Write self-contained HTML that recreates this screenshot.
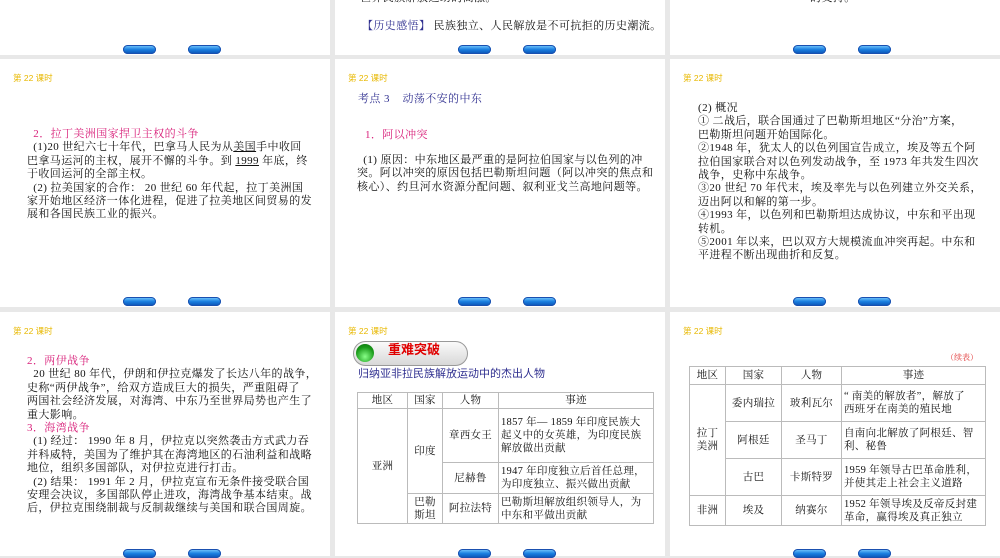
<!DOCTYPE html>
<html><head><meta charset="utf-8"><style>
*{margin:0;padding:0;box-sizing:border-box}
body{width:1000px;height:556px;background:#e8e8e8;position:relative;overflow:hidden;font-family:"Liberation Serif","Noto Serif CJK SC","Noto Sans CJK SC",serif;font-size:11px;letter-spacing:0.4px;color:#111}
.s{position:absolute;background:#fff;overflow:hidden}
.a{position:absolute;white-space:nowrap;line-height:13.4px}
.t{color:#e8b800;font-size:8.5px;letter-spacing:0;font-family:"Liberation Sans","Noto Sans CJK SC",sans-serif}
.m{color:#d8207a}
.b{color:#303090}
.btn{position:absolute;width:33px;height:9px;border-radius:5px;background:linear-gradient(#7fd0ff,#1a7fe0 50%,#0a4fb0);box-shadow:0 0 0 1px #1a50b0 inset}
table{position:absolute;border-collapse:collapse;font-size:10.5px;letter-spacing:0.3px;table-layout:fixed}
td{border:1px solid #bbb;text-align:center;line-height:13px;padding:0 2px;white-space:nowrap;overflow:hidden}
td.l{text-align:left}
</style></head><body>
<!-- row1 -->
<div class="s" style="left:0;top:0;width:330px;height:55px"></div>
<div class="s" style="left:335px;top:0;width:330px;height:55px">
<div class="a" style="left:25px;top:-8px">世界民族解放运动的高涨。</div>
<div class="a" style="left:27px;top:20px"><span class="b">【历史感悟】</span> 民族独立、人民解放是不可抗拒的历史潮流。</div></div>
<div class="s" style="left:670px;top:0;width:330px;height:55px"><div class="a" style="left:140px;top:-8px">的支持。</div></div>
<!-- row2 -->
<div class="s" style="left:0;top:59px;width:330px;height:248px">
<div class="a t" style="left:13px;top:13px">第 22 课时</div>
<div class="a" style="left:27px;top:69px"><span class="m">&nbsp;&nbsp;2．拉丁美洲国家捍卫主权的斗争</span><br>&nbsp;&nbsp;(1)20 世纪六七十年代，巴拿马人民为从<u>美国</u>手中收回<br>巴拿马运河的主权，展开不懈的斗争。到 <u>1999</u> 年底，终<br>于收回运河的全部主权。<br>&nbsp;&nbsp;(2) 拉美国家的合作： 20 世纪 60 年代起，拉丁美洲国<br>家开始地区经济一体化进程，促进了拉美地区间贸易的发<br>展和各国民族工业的振兴。</div></div>
<div class="s" style="left:335px;top:59px;width:330px;height:248px">
<div class="a t" style="left:13px;top:13px">第 22 课时</div>
<div class="a b" style="left:23px;top:34px">考点 3&nbsp;&nbsp;&nbsp;&nbsp;动荡不安的中东</div>
<div class="a m" style="left:30px;top:70px">1．阿以冲突</div>
<div class="a" style="left:22px;top:95px">&nbsp;&nbsp;(1) 原因：中东地区最严重的是阿拉伯国家与以色列的冲<br>突。阿以冲突的原因包括巴勒斯坦问题（阿以冲突的焦点和<br>核心）、约旦河水资源分配问题、叙利亚戈兰高地问题等。</div></div>
<div class="s" style="left:670px;top:59px;width:330px;height:248px">
<div class="a t" style="left:13px;top:13px">第 22 课时</div>
<div class="a" style="left:28px;top:43px">(2) 概况<br>① 二战后，联合国通过了巴勒斯坦地区“分治”方案，<br>巴勒斯坦问题开始国际化。<br>②1948 年，犹太人的以色列国宣告成立，埃及等五个阿<br>拉伯国家联合对以色列发动战争，至 1973 年共发生四次<br>战争，史称中东战争。<br>③20 世纪 70 年代末，埃及率先与以色列建立外交关系，<br>迈出阿以和解的第一步。<br>④1993 年，以色列和巴勒斯坦达成协议，中东和平出现<br>转机。<br>⑤2001 年以来，巴以双方大规模流血冲突再起。中东和<br>平进程不断出现曲折和反复。</div></div>
<!-- row3 -->
<div class="s" style="left:0;top:312px;width:330px;height:244px">
<div class="a t" style="left:13px;top:13px">第 22 课时</div>
<div class="a" style="left:27px;top:43px"><span class="m">2．两伊战争</span><br>&nbsp;&nbsp;20 世纪 80 年代，伊朗和伊拉克爆发了长达八年的战争，<br>史称“两伊战争”，给双方造成巨大的损失，严重阻碍了<br>两国社会经济发展，对海湾、中东乃至世界局势也产生了<br>重大影响。<br><span class="m">3．海湾战争</span><br>&nbsp;&nbsp;(1) 经过： 1990 年 8 月，伊拉克以突然袭击方式武力吞<br>并科威特，美国为了维护其在海湾地区的石油利益和战略<br>地位，组织多国部队，对伊拉克进行打击。<br>&nbsp;&nbsp;(2) 结果： 1991 年 2 月，伊拉克宣布无条件接受联合国<br>安理会决议，多国部队停止进攻，海湾战争基本结束。战<br>后，伊拉克围绕制裁与反制裁继续与美国和联合国周旋。</div></div>
<div class="s" style="left:335px;top:312px;width:330px;height:244px">
<div class="a t" style="left:13px;top:13px">第 22 课时</div>
<div style="position:absolute;left:18px;top:29px;width:115px;height:25px;border-radius:13px;background:linear-gradient(#fafafa,#d8d8d8);border:1px solid #999"></div>
<div style="position:absolute;left:21px;top:32px;width:18px;height:18px;border-radius:50%;background:radial-gradient(circle at 50% 70%,#8f8,#1a9a1a 60%,#0a6a0a)"></div>
<div class="a" style="left:53px;top:31px;color:#e00000;font-size:13px;font-weight:bold;letter-spacing:0;font-family:'Liberation Sans','Noto Sans CJK SC',sans-serif">重难突破</div>
<div class="a b" style="left:23px;top:56px;font-size:11px;letter-spacing:0;font-family:'Liberation Sans','Noto Sans CJK SC',sans-serif">归纳亚非拉民族解放运动中的杰出人物</div>
<table style="left:22px;top:80px;width:297px">
<colgroup><col style="width:50px"><col style="width:35px"><col style="width:56px"><col></colgroup>
<tr style="height:16px"><td>地区</td><td>国家</td><td>人物</td><td>事迹</td></tr>
<tr style="height:54px"><td rowspan="3">亚洲</td><td rowspan="2">印度</td><td>章西女王</td><td class="l">1857 年— 1859 年印度民族大<br>起义中的女英雄，为印度民族<br>解放做出贡献</td></tr>
<tr style="height:31px"><td>尼赫鲁</td><td class="l">1947 年印度独立后首任总理，<br>为印度独立、振兴做出贡献</td></tr>
<tr style="height:30px"><td>巴勒<br>斯坦</td><td>阿拉法特</td><td class="l">巴勒斯坦解放组织领导人，为<br>中东和平做出贡献</td></tr>
</table></div>
<div class="s" style="left:670px;top:312px;width:330px;height:244px">
<div class="a t" style="left:13px;top:13px">第 22 课时</div>
<div class="a" style="left:276px;top:39px;color:#e03030;font-size:8px;letter-spacing:0">（续表）</div>
<table style="left:19px;top:54px;width:297px">
<colgroup><col style="width:36px"><col style="width:56px"><col style="width:60px"><col></colgroup>
<tr style="height:18px"><td>地区</td><td>国家</td><td>人物</td><td>事迹</td></tr>
<tr style="height:37px"><td rowspan="3">拉丁<br>美洲</td><td>委内瑞拉</td><td>玻利瓦尔</td><td class="l">“ 南美的解放者”，解放了<br>西班牙在南美的殖民地</td></tr>
<tr style="height:37px"><td>阿根廷</td><td>圣马丁</td><td class="l">自南向北解放了阿根廷、智<br>利、秘鲁</td></tr>
<tr style="height:37px"><td>古巴</td><td>卡斯特罗</td><td class="l">1959 年领导古巴革命胜利，<br>并使其走上社会主义道路</td></tr>
<tr style="height:30px"><td>非洲</td><td>埃及</td><td>纳赛尔</td><td class="l">1952 年领导埃及反帝反封建<br>革命，赢得埃及真正独立</td></tr>
</table></div>
<!-- buttons -->
<div class="btn" style="left:123px;top:45px"></div><div class="btn" style="left:188px;top:45px"></div>
<div class="btn" style="left:458px;top:45px"></div><div class="btn" style="left:523px;top:45px"></div>
<div class="btn" style="left:793px;top:45px"></div><div class="btn" style="left:858px;top:45px"></div>
<div class="btn" style="left:123px;top:297px"></div><div class="btn" style="left:188px;top:297px"></div>
<div class="btn" style="left:458px;top:297px"></div><div class="btn" style="left:523px;top:297px"></div>
<div class="btn" style="left:793px;top:297px"></div><div class="btn" style="left:858px;top:297px"></div>
<div class="btn" style="left:123px;top:549px"></div><div class="btn" style="left:188px;top:549px"></div>
<div class="btn" style="left:458px;top:549px"></div><div class="btn" style="left:523px;top:549px"></div>
<div class="btn" style="left:793px;top:549px"></div><div class="btn" style="left:858px;top:549px"></div>
</body></html>
